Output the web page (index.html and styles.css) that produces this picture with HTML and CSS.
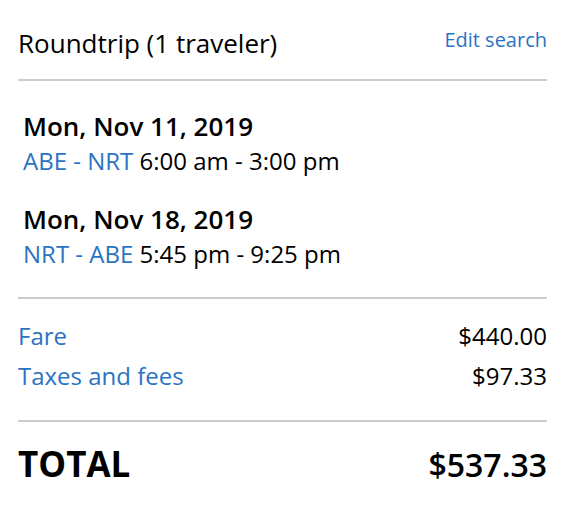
FILE: index.html
```html
<!DOCTYPE html>
<html>
<head>
<meta charset="utf-8">
<link rel="stylesheet" href="styles.css">
</head>
<body>
<div class="summary">
  <div class="header">
    <div class="title">Roundtrip (1 traveler)</div>
    <a class="edit">Edit search</a>
  </div>
  <div class="trips">
    <div class="trip">
      <div class="date">Mon, Nov 11, 2019</div>
      <div class="route"><span class="code">ABE - NRT</span> 6:00 am - 3:00 pm</div>
    </div>
    <div class="trip">
      <div class="date">Mon, Nov 18, 2019</div>
      <div class="route"><span class="code">NRT - ABE</span> 5:45 pm - 9:25 pm</div>
    </div>
  </div>
  <div class="costs">
    <div class="row"><span class="label">Fare</span><span class="amount">$440.00</span></div>
    <div class="row"><span class="label">Taxes and fees</span><span class="amount">$97.33</span></div>
  </div>
  <div class="total">
    <span class="total-label">TOTAL</span><span class="total-amount">$537.33</span>
  </div>
</div>
</body>
</html>
```
FILE: styles.css
```css
* { box-sizing: border-box; }
body {
  margin: 0;
  background: #fff;
  font-family: "Open Sans", "Noto Sans", sans-serif;
  color: #000;
}
.summary {
  padding: 0 15px 0 18px;
}
.header {
  display: flex;
  justify-content: space-between;
  align-items: flex-start;
  padding: 29px 0 22px;
  border-bottom: 2px solid #cccccc;
}
.title {
  font-size: 26px;
  line-height: 28px;
}
.edit {
  color: #2a73c2;
  font-size: 20px;
  line-height: 22px;
}
.trips {
  padding: 30px 0 28px 5px;
  border-bottom: 2px solid #cccccc;
  display: flex;
  flex-direction: column;
  gap: 28px;
}
.date {
  font-weight: 600;
  font-size: 26px;
  line-height: 30px;
}
.route {
  font-size: 24px;
  line-height: 30px;
  margin-top: 5px;
}
.code { color: #2a73c2; }
.costs {
  padding: 22px 0 29px;
  border-bottom: 2px solid #cccccc;
  display: flex;
  flex-direction: column;
  gap: 10px;
}
.row {
  display: flex;
  justify-content: space-between;
  font-size: 24px;
  line-height: 30px;
}
.label { color: #2a73c2; }
.total {
  display: flex;
  justify-content: space-between;
  align-items: baseline;
  padding-top: 22px;
  line-height: 40px;
}
.total-label {
  font-weight: 700;
  font-size: 35px;
}
.total-amount {
  font-weight: 600;
  font-size: 32px;
}
```
